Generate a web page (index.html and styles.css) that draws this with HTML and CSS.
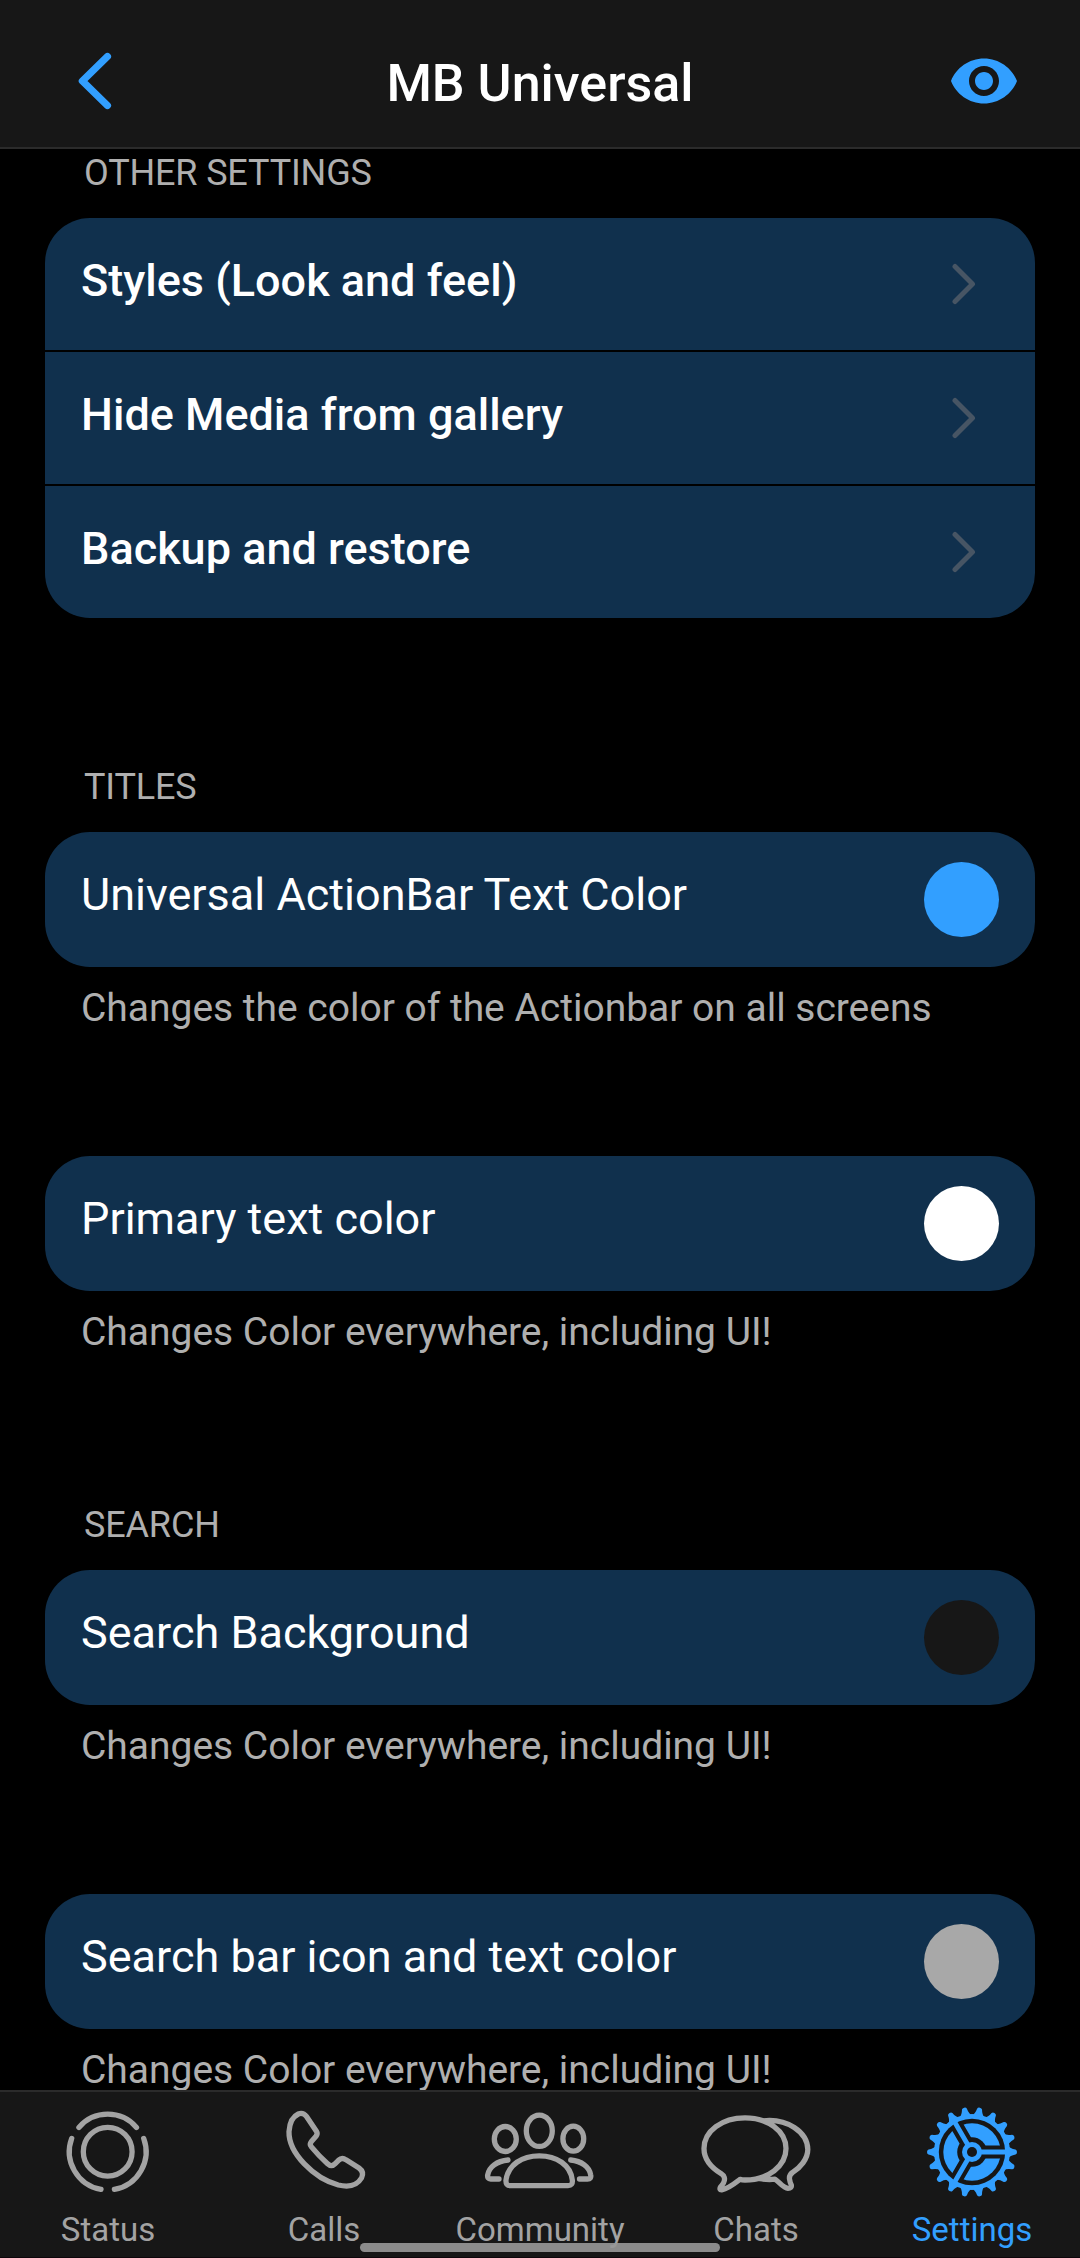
FILE: index.html
```html
<!DOCTYPE html>
<html lang="en">
<head>
<meta charset="utf-8">
<title>MB Universal</title>
<link rel="stylesheet" href="styles.css">
</head>
<body>
<div class="screen">
  <header class="topbar">
    <svg class="topbar-icon" viewBox="0 0 72 72"><path class="back" d="M47.400 11.500 22.400 36l25 24.500"/></svg>
    <h1 class="title">MB Universal</h1>
    <svg class="topbar-icon" viewBox="0 0 24 24"><path class="eye" d="M12 4.500C7 4.500 2.730 7.610 1 12c1.730 4.390 6 7.500 11 7.500s9.270-3.110 11-7.500c-1.730-4.390-6-7.500-11-7.500zM12 17c-2.760 0-5-2.240-5-5s2.240-5 5-5 5 2.240 5 5-2.240 5-5 5zm0-8c-1.660 0-3 1.340-3 3s1.340 3 3 3 3-1.340 3-3-1.340-3-3-3z"/></svg>
  </header>

  <main class="content">
    <section class="section">
      <h2 class="heading">OTHER SETTINGS</h2>
      <div class="card links">
        <div class="row strong"><span class="label">Styles (Look and feel)</span><svg class="chevron" viewBox="0 0 24 42"><path d="M3 3.500 20.500 21 3 38.500"/></svg></div>
        <div class="row strong"><span class="label">Hide Media from gallery</span><svg class="chevron" viewBox="0 0 24 42"><path d="M3 3.500 20.500 21 3 38.500"/></svg></div>
        <div class="row strong"><span class="label">Backup and restore</span><svg class="chevron" viewBox="0 0 24 42"><path d="M3 3.500 20.500 21 3 38.500"/></svg></div>
      </div>
    </section>

    <section class="section titles">
      <h2 class="heading">TITLES</h2>
      <div class="option">
        <div class="card row color-row"><span class="label">Universal ActionBar Text Color</span><span class="swatch blue"></span></div>
        <p class="hint">Changes the color of the Actionbar on all screens</p>
      </div>
      <div class="option">
        <div class="card row color-row"><span class="label">Primary text color</span><span class="swatch white"></span></div>
        <p class="hint">Changes Color everywhere, including UI!</p>
      </div>
    </section>

    <section class="section search">
      <h2 class="heading">SEARCH</h2>
      <div class="option">
        <div class="card row color-row"><span class="label">Search Background</span><span class="swatch dark"></span></div>
        <p class="hint">Changes Color everywhere, including UI!</p>
      </div>
      <div class="option">
        <div class="card row color-row"><span class="label">Search bar icon and text color</span><span class="swatch gray"></span></div>
        <p class="hint">Changes Color everywhere, including UI!</p>
      </div>
    </section>
  </main>

  <nav class="tabs">
    <a class="tab">
      <svg class="tab-icon" viewBox="0 0 108 100"><circle cx="53.700" cy="49.700" r="24.400"/><path d="M24.900 25.400a38 38 0 0 1 57.600 0M89.700 36.400A38.300 38.300 0 0 1 60.400 87.400M17.700 36.400A38.300 38.300 0 0 0 47 87.400"/></svg>
      <span>Status</span>
    </a>
    <a class="tab">
      <svg class="tab-icon" viewBox="0 0 108 100"><path d="M36.700 14.700 46.400 29.200Q48 31.800 46 34.300L41.200 39.800Q39.200 42.300 41.200 44.600Q48.500 53.500 57.300 61.500Q61.500 65.500 65.200 61.600L68.500 58.300Q72 55 76 57.800L89 66Q94.500 70 91.500 76Q85 87 68.300 83C44 76.500 18.500 51 19 29.700Q19.800 16 28.300 12Q33 10 36.700 14.700Z"/></svg>
      <span>Calls</span>
    </a>
    <a class="tab">
      <svg class="tab-icon" viewBox="0 0 108 100"><ellipse cx="53.300" cy="28.800" rx="13" ry="15.600"/><ellipse cx="19.300" cy="37" rx="11" ry="12.500"/><ellipse cx="87.300" cy="36.700" rx="10.400" ry="12.500"/><path d="M20 78C22 63 36 53.800 53.300 53.800S84.500 63 86.300 78Q87 83.700 82 83.700H24.500Q19.500 83.700 20 78ZM22 58C11 59 3 65 1.700 73Q1 77 4.700 77H13M84.700 58C95.500 59 103.500 65 104.700 73Q105.500 77 101.500 77H93.500"/></svg>
      <span>Community</span>
    </a>
    <a class="tab">
      <svg class="tab-icon" viewBox="0 0 108 100"><path d="M19.700 72C8 65 2 56 2 46.500C2 29 20 15.800 43 15.800S84 29 84 46.500S66 78 43 78Q40 78 38 77.300C32 82 27 86.500 19.700 87.800Q17 88 18.500 85Q23.500 79.500 22.300 75.500Q21.500 73 19.700 72ZM61 18.800C85 16 105.500 30 105.800 47.500C105.800 57 98 66 90.500 70.500Q87 73 87.500 77Q88 80.500 89.300 83Q90 86.300 86 86.300C81 86 77.500 80 73 77.200Q66 78 58 76.700"/></svg>
      <span>Chats</span>
    </a>
    <a class="tab active">
      <svg class="tab-icon gear" viewBox="-54 -50 108 100">
        <defs>
          <path id="tooth" d="M36 -6.500Q38 -3.500 43.500 -2.500Q45 -2 45 0T43.500 2.500Q38 3.500 36 6.500Z"/>
          <g id="teeth"><use href="#tooth"/><use href="#tooth" transform="rotate(20)"/><use href="#tooth" transform="rotate(40)"/><use href="#tooth" transform="rotate(60)"/><use href="#tooth" transform="rotate(80)"/><use href="#tooth" transform="rotate(100)"/></g>
        </defs>
        <use href="#teeth"/><use href="#teeth" transform="rotate(120)"/><use href="#teeth" transform="rotate(240)"/>
        <circle r="38"/>
        <circle class="cut" r="33.200"/>
        <circle r="28.700"/>
        <circle class="cut" r="14.800"/>
        <path class="gap" d="M0 0H31M0 0-15.500 26.850M0 0-15.500-26.850"/>
        <path class="spoke" d="M0 0H35M0 0-17.500 30.310M0 0-17.500-30.310"/>
        <circle r="10"/>
        <circle class="cut" r="5"/>
      </svg>
      <span>Settings</span>
    </a>
    <div class="home-indicator"></div>
  </nav>
</div>
</body>
</html>
```
FILE: styles.css
```css
* { box-sizing: border-box; margin: 0; }

body {
  background: #000;
  font-family: Roboto, "Noto Sans", sans-serif;
  font-weight: 400;
}

.screen {
  display: flex;
  flex-direction: column;
  width: 1080px;
  height: 2258px;
  overflow: hidden;
}

.topbar {
  flex: none;
  display: flex;
  justify-content: space-between;
  align-items: center;
  height: 149px;
  padding: 15px 60px 0;
  background: #171717;
  border-bottom: 2px solid #2b2b2b;
}

.topbar-icon { width: 72px; height: 72px; }

.back {
  fill: none;
  stroke: #329fff;
  stroke-width: 7.3;
  stroke-linecap: round;
  stroke-linejoin: round;
}

.eye { fill: #329fff; }

.title {
  color: #fff;
  font-size: 52px;
  font-weight: 500;
  line-height: 60px;
  padding-top: 6px;
}

.content {
  flex: 1;
  min-height: 0;
  overflow: hidden;
  padding: 0 45px;
}

.heading {
  padding-left: 39px;
  margin-bottom: 21px;
  color: #afafaf;
  font-size: 36px;
  font-weight: 400;
  line-height: 48px;
  letter-spacing: -0.15px;
}

.titles { margin-top: 145px; }
.search { margin-top: 140px; }

.card {
  border-radius: 45px;
  overflow: hidden;
}

.links {
  display: flex;
  flex-direction: column;
  gap: 2px;
}

.row {
  display: flex;
  justify-content: space-between;
  align-items: center;
  height: 132px;
  padding: 0 59px 0 36px;
  background: #10304d;
}

.color-row {
  height: 135px;
  padding-right: 36px;
}

.label {
  align-self: flex-start;
  color: #fff;
  font-size: 45px;
  line-height: 125px;
}

.strong .label { font-weight: 500; }

.chevron {
  width: 24px;
  height: 42px;
  fill: none;
  stroke: #475564;
  stroke-width: 5;
  stroke-linecap: round;
  stroke-linejoin: round;
}

.swatch {
  width: 75px;
  height: 75px;
  border-radius: 50%;
}

.blue { background: #329fff; }
.white { background: #fff; }
.dark { background: #171717; }
.gray { background: #a8a8a8; }

.option + .option { margin-top: 119px; }

.hint {
  padding: 12px 0 0 36px;
  color: #afafaf;
  font-size: 39px;
  line-height: 58px;
  letter-spacing: -0.02px;
}

.tabs {
  position: relative;
  flex: none;
  display: grid;
  grid-template-columns: repeat(5, 1fr);
  height: 168px;
  padding-top: 10px;
  background: #171717;
  border-top: 2px solid #2b2b2b;
  border-bottom: 1px solid #0d060b;
}

.tab {
  display: flex;
  flex-direction: column;
  align-items: center;
  gap: 6px;
  color: #a3a3a3;
  font-size: 33px;
  line-height: 44px;
}

.tab-icon {
  width: 108px;
  height: 100px;
  overflow: visible;
  fill: none;
  stroke: #a3a3a3;
  stroke-width: 5.3;
  stroke-linecap: round;
  stroke-linejoin: round;
}

.active { color: #329fff; }

.gear {
  fill: #329fff;
  stroke: none;
}

.cut { fill: #171717; }

.gap {
  stroke: #171717;
  stroke-width: 13;
  stroke-linecap: butt;
}

.spoke {
  stroke: #329fff;
  stroke-width: 4.8;
}

.home-indicator {
  position: absolute;
  left: 360px;
  bottom: 5px;
  width: 360px;
  height: 9px;
  border-radius: 5px;
  background: rgba(151, 151, 151, 0.92);
}
```
